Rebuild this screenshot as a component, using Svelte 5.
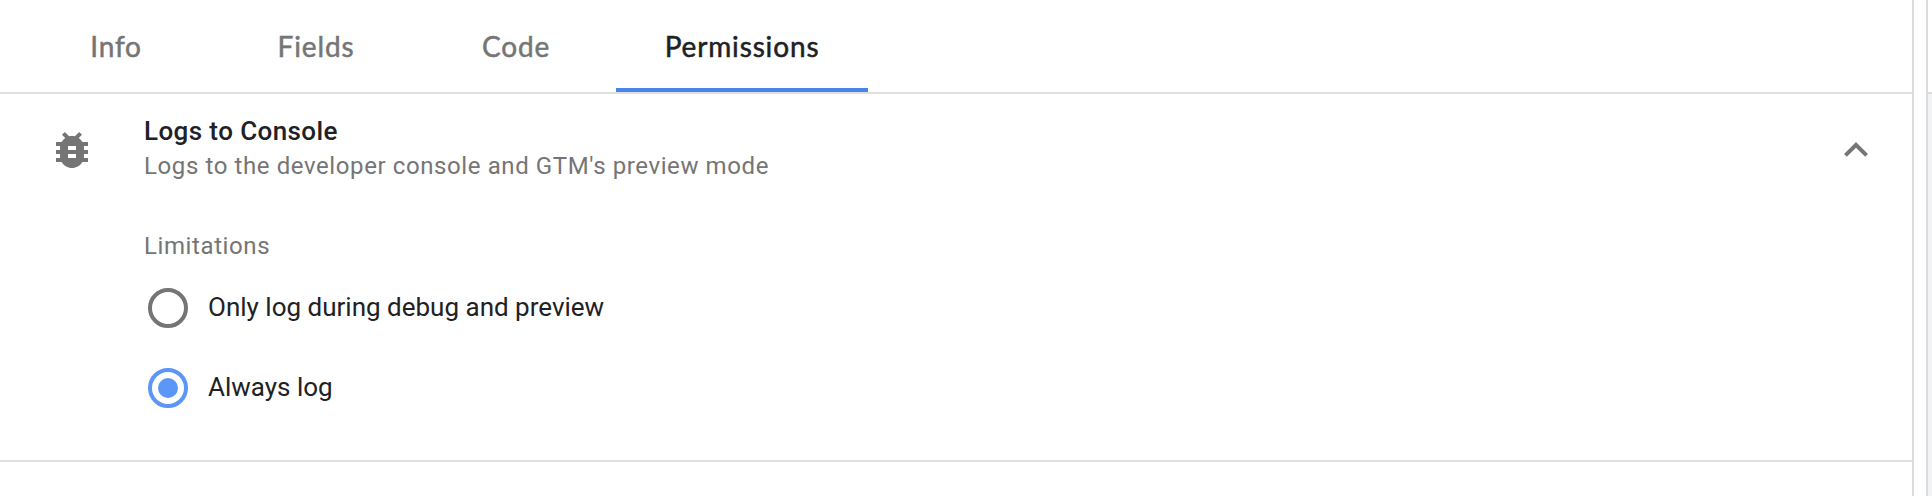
<script>
  const tabs = ['Info', 'Fields', 'Code', 'Permissions'];
  const options = [
    { id: 'debug', label: 'Only log during debug and preview' },
    { id: 'all', label: 'Always log' }
  ];
  let active = $state('Permissions');
  let selected = $state('all');
</script>

<div class="page">
  <main class="panel">
    <nav class="tabs">
      {#each tabs as tab}
        <button class="tab {tab.toLowerCase()}" class:active={active === tab} onclick={() => (active = tab)}>
          <span>{tab}</span>
        </button>
      {/each}
    </nav>
    <section class="permission">
      <header class="head">
        <svg class="icon" viewBox="0 0 24 24" aria-hidden="true">
          <path d="M20 8h-2.81c-.45-.78-1.07-1.45-1.82-1.96L17 4.41 15.59 3l-2.17 2.17C12.96 5.06 12.49 5 12 5c-.49 0-.96.06-1.41.17L8.41 3 7 4.41l1.62 1.63C7.88 6.55 7.26 7.22 6.81 8H4v2h2.09c-.05.33-.09.66-.09 1v1H4v2h2v1c0 .34.04.67.09 1H4v2h2.81c1.04 1.79 2.97 3 5.19 3s4.15-1.21 5.19-3H20v-2h-2.09c.05-.33.09-.66.09-1v-1h2v-2h-2v-1c0-.34-.04-.67-.09-1H20V8zm-6 8h-4v-2h4v2zm0-4h-4v-2h4v2z" />
        </svg>
        <div class="titles">
          <div class="title">Logs to Console</div>
          <div class="subtitle">Logs to the developer console and GTM's preview mode</div>
        </div>
        <svg class="icon" viewBox="0 0 24 24" aria-hidden="true">
          <path d="M12 8l-6 6 1.41 1.41L12 10.83l4.59 4.58L18 14z" />
        </svg>
      </header>
      <div class="body">
        <div class="caption">Limitations</div>
        {#each options as option}
          <button class="option" role="radio" aria-checked={selected === option.id} onclick={() => (selected = option.id)}>
            <span class="radio" class:checked={selected === option.id}></span>
            <span class="label">{option.label}</span>
          </button>
        {/each}
      </div>
    </section>
  </main>
  <aside class="side"><div class="side-head"></div></aside>
</div>

<style>
  :global(body) {
    background: #fff;
    overflow: hidden;
  }
  .page {
    display: flex;
    justify-content: space-between;
    height: 496px;
    font-family: Roboto, sans-serif;
    color: #202124;
  }
  .panel {
    box-sizing: border-box;
    width: 1914px;
    border-right: 2px solid #dadcdd;
  }
  .side {
    box-sizing: border-box;
    width: 6px;
    border-left: 2px solid #dadcdd;
    background: #f1f3f4;
  }
  .side-head {
    height: 92px;
    background: #fff;
    border-bottom: 2px solid #dadcdd;
  }
  button {
    border: 0;
    padding: 0;
    background: none;
    font: inherit;
    color: inherit;
    cursor: pointer;
  }
  .tabs {
    display: flex;
    height: 92px;
    padding-left: 16px;
    border-bottom: 2px solid #dfdfdf;
  }
  .tab {
    box-sizing: border-box;
    width: 200px;
    border-bottom: 4px solid transparent;
    padding-top: 3px;
    font-family: Lato, sans-serif;
    font-size: 28px;
    line-height: 84px;
    letter-spacing: 0.85px;
    color: #757575;
    -webkit-text-stroke: 0.5px currentColor;
    white-space: nowrap;
  }
  .permissions {
    width: 252px;
  }
  .active {
    color: #202124;
    border-color: #4683ea;
  }
  .permission {
    box-sizing: border-box;
    height: 368px;
    border-bottom: 2px solid #dfdfdf;
  }
  .head {
    display: flex;
    height: 112px;
    padding: 0 32px 0 48px;
    align-items: center;
  }
  .icon {
    flex: none;
    width: 48px;
    height: 48px;
    fill: #757575;
  }
  .titles {
    flex: 1;
    padding: 0 0 4px 48px;
  }
  .title {
    font-size: 26px;
    line-height: 36px;
    font-weight: 500;
    letter-spacing: 0.4px;
  }
  .subtitle {
    font-size: 24px;
    line-height: 34px;
    letter-spacing: 0.6px;
    color: #757575;
  }
  .body {
    padding: 22px 0 0 144px;
  }
  .caption {
    height: 40px;
    line-height: 36px;
    font-size: 24px;
    letter-spacing: 0.6px;
    color: #757575;
  }
  .option {
    display: flex;
    align-items: center;
    height: 80px;
    padding-left: 4px;
  }
  .radio {
    box-sizing: border-box;
    display: grid;
    place-items: center;
    width: 40px;
    height: 40px;
    border: 4px solid #757575;
    border-radius: 50%;
  }
  .checked {
    border-color: #5c97f7;
  }
  .checked::after {
    content: '';
    width: 20px;
    height: 20px;
    border-radius: 50%;
    background: #5c97f7;
  }
  .label {
    padding: 0 0 2px 20px;
    font-size: 26px;
    line-height: 36px;
  }
</style>
